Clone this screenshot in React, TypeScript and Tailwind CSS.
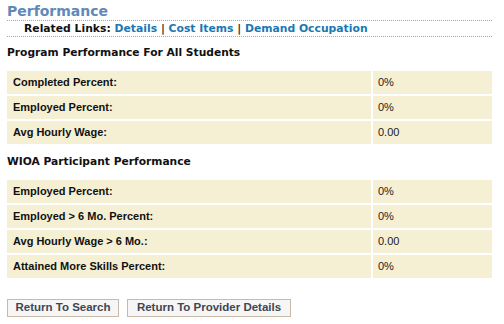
const programRows = [
  { label: "Completed Percent:", value: "0%" },
  { label: "Employed Percent:", value: "0%" },
  { label: "Avg Hourly Wage:", value: "0.00" },
];

const wioaRows = [
  { label: "Employed Percent:", value: "0%" },
  { label: "Employed > 6 Mo. Percent:", value: "0%" },
  { label: "Avg Hourly Wage > 6 Mo.:", value: "0.00" },
  { label: "Attained More Skills Percent:", value: "0%" },
];

function StatTable({ rows }: { rows: { label: string; value: string }[] }) {
  return (
    <div className="grid grid-cols-[364px_1fr] gap-[2px] font-['Liberation_Sans',Arial,sans-serif] text-[11px]">
      {rows.map((row) => (
        <div key={row.label} className="contents">
          <div className="h-[23px] bg-[#f5f0d4] pl-[6px] flex items-center font-bold text-[#111]">
            {row.label}
          </div>
          <div className="h-[23px] bg-[#f5f0d4] pl-[5px] flex items-center text-[#222]">
            {row.value}
          </div>
        </div>
      ))}
    </div>
  );
}

export default function App() {
  return (
    <div className="w-[504px] h-[324px] bg-white px-[7px] pr-[12px] font-['DejaVu_Sans',Verdana,sans-serif]">
      <div className="h-[21px] border-b border-dotted border-[#aaa795] text-[14px] font-bold text-[#6189b8] leading-[20px] pt-[1px]">
        Performance
      </div>
      <div className="h-[16px] border-b border-dotted border-[#aaa795] pl-[17px] text-[10.8px] font-bold leading-[15px] text-[#111]">
        Related Links:{" "}
        <a className="text-[#1b78b4]">Details</a>
        <span className="text-[#333]"> | </span>
        <a className="text-[#1b78b4]">Cost Items</a>
        <span className="text-[#333]"> | </span>
        <a className="text-[#1b78b4]">Demand Occupation</a>
      </div>
      <div className="mt-[5px] mb-[8px] text-[10.7px] font-bold leading-[21px] text-[#111]">
        Program Performance For All Students
      </div>
      <StatTable rows={programRows} />
      <div className="mt-[4px] mb-[5px] text-[10.7px] font-bold leading-[27px] text-[#111]">
        WIOA Participant Performance
      </div>
      <StatTable rows={wioaRows} />
      <div className="mt-[21px] flex gap-[8px] font-['Liberation_Sans',Arial,sans-serif]">
        <button className="h-[18px] w-[112px] border border-[#c9b9a6] bg-[#f6f6f6] text-[11.5px] font-bold text-[#3f4652] leading-none">
          Return To Search
        </button>
        <button className="h-[18px] w-[164px] border border-[#c9b9a6] bg-[#f6f6f6] text-[11.5px] font-bold text-[#3f4652] leading-none">
          Return To Provider Details
        </button>
      </div>
    </div>
  );
}
